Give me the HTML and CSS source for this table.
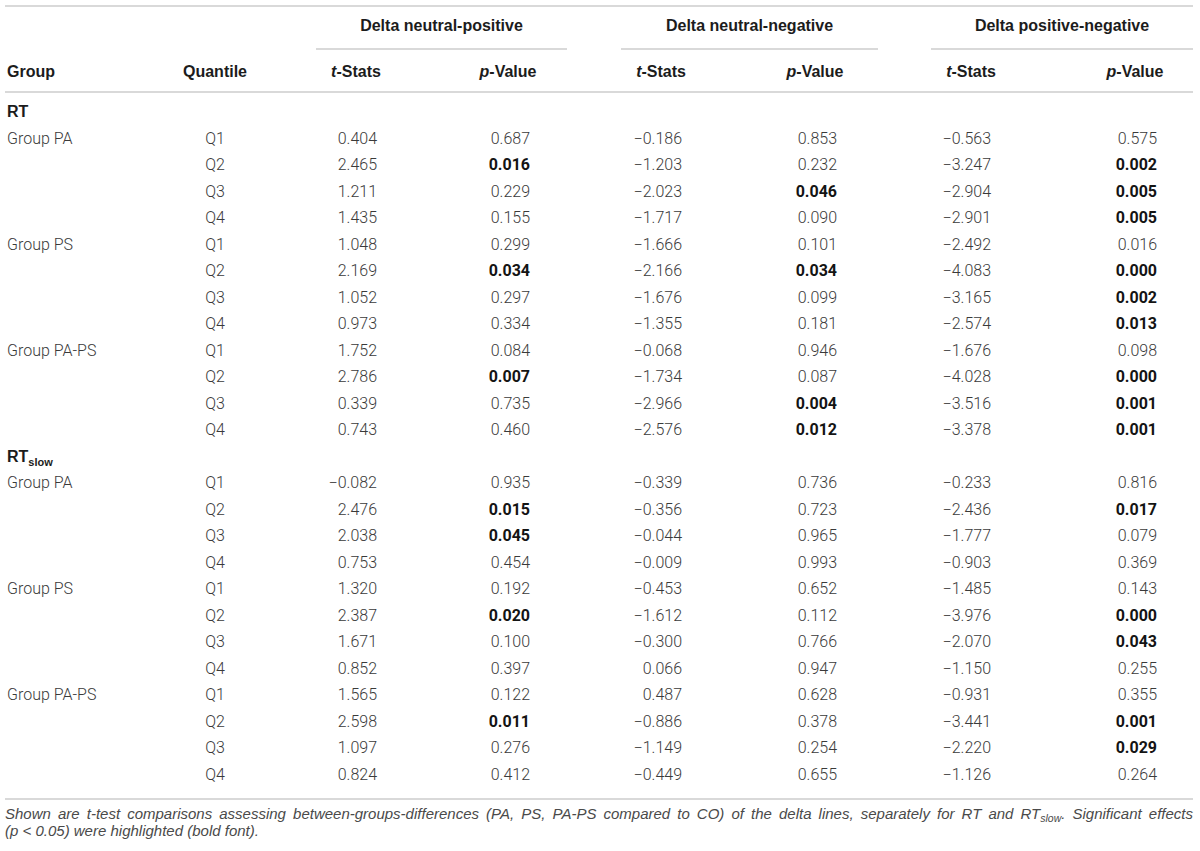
FILE: index.html
```html
<!doctype html>
<html>
  <head>
    <meta charset="UTF-8" />
    <title>Delta lines t-test comparisons</title>
    <link rel="stylesheet" href="styles.css">
  </head>
  <body>
    <table class="results">
      <colgroup>
        <col class="w-group" />
        <col class="w-quant" />
        <col class="w-t1" />
        <col class="w-p1" />
        <col class="w-t2" />
        <col class="w-p2" />
        <col class="w-t3" />
        <col class="w-p3" />
      </colgroup>
      <thead>
        <tr class="head-top">
          <th></th>
          <th></th>
          <th colspan="2"><div class="span-head span-1">Delta neutral-positive</div></th>
          <th colspan="2"><div class="span-head span-2">Delta neutral-negative</div></th>
          <th colspan="2"><div class="span-head span-3">Delta positive-negative</div></th>
        </tr>
        <tr class="head-sub">
          <th class="col-group">Group</th>
          <th>Quantile</th>
          <th><i>t</i>-Stats</th>
          <th><i>p</i>-Value</th>
          <th><i>t</i>-Stats</th>
          <th><i>p</i>-Value</th>
          <th><i>t</i>-Stats</th>
          <th class="last-head"><i>p</i>-Value</th>
        </tr>
      </thead>
      <tbody>
        <tr class="section first"><th colspan="8">RT</th></tr>
        <tr><td>Group PA</td><td>Q1</td><td>0.404</td><td>0.687</td><td>−0.186</td><td>0.853</td><td>−0.563</td><td>0.575</td></tr>
        <tr><td></td><td>Q2</td><td>2.465</td><td><b>0.016</b></td><td>−1.203</td><td>0.232</td><td>−3.247</td><td><b>0.002</b></td></tr>
        <tr><td></td><td>Q3</td><td>1.211</td><td>0.229</td><td>−2.023</td><td><b>0.046</b></td><td>−2.904</td><td><b>0.005</b></td></tr>
        <tr><td></td><td>Q4</td><td>1.435</td><td>0.155</td><td>−1.717</td><td>0.090</td><td>−2.901</td><td><b>0.005</b></td></tr>
        <tr><td>Group PS</td><td>Q1</td><td>1.048</td><td>0.299</td><td>−1.666</td><td>0.101</td><td>−2.492</td><td>0.016</td></tr>
        <tr><td></td><td>Q2</td><td>2.169</td><td><b>0.034</b></td><td>−2.166</td><td><b>0.034</b></td><td>−4.083</td><td><b>0.000</b></td></tr>
        <tr><td></td><td>Q3</td><td>1.052</td><td>0.297</td><td>−1.676</td><td>0.099</td><td>−3.165</td><td><b>0.002</b></td></tr>
        <tr><td></td><td>Q4</td><td>0.973</td><td>0.334</td><td>−1.355</td><td>0.181</td><td>−2.574</td><td><b>0.013</b></td></tr>
        <tr><td>Group PA-PS</td><td>Q1</td><td>1.752</td><td>0.084</td><td>−0.068</td><td>0.946</td><td>−1.676</td><td>0.098</td></tr>
        <tr><td></td><td>Q2</td><td>2.786</td><td><b>0.007</b></td><td>−1.734</td><td>0.087</td><td>−4.028</td><td><b>0.000</b></td></tr>
        <tr><td></td><td>Q3</td><td>0.339</td><td>0.735</td><td>−2.966</td><td><b>0.004</b></td><td>−3.516</td><td><b>0.001</b></td></tr>
        <tr><td></td><td>Q4</td><td>0.743</td><td>0.460</td><td>−2.576</td><td><b>0.012</b></td><td>−3.378</td><td><b>0.001</b></td></tr>
        <tr class="section"><th colspan="8">RT<sub>slow</sub></th></tr>
        <tr><td>Group PA</td><td>Q1</td><td>−0.082</td><td>0.935</td><td>−0.339</td><td>0.736</td><td>−0.233</td><td>0.816</td></tr>
        <tr><td></td><td>Q2</td><td>2.476</td><td><b>0.015</b></td><td>−0.356</td><td>0.723</td><td>−2.436</td><td><b>0.017</b></td></tr>
        <tr><td></td><td>Q3</td><td>2.038</td><td><b>0.045</b></td><td>−0.044</td><td>0.965</td><td>−1.777</td><td>0.079</td></tr>
        <tr><td></td><td>Q4</td><td>0.753</td><td>0.454</td><td>−0.009</td><td>0.993</td><td>−0.903</td><td>0.369</td></tr>
        <tr><td>Group PS</td><td>Q1</td><td>1.320</td><td>0.192</td><td>−0.453</td><td>0.652</td><td>−1.485</td><td>0.143</td></tr>
        <tr><td></td><td>Q2</td><td>2.387</td><td><b>0.020</b></td><td>−1.612</td><td>0.112</td><td>−3.976</td><td><b>0.000</b></td></tr>
        <tr><td></td><td>Q3</td><td>1.671</td><td>0.100</td><td>−0.300</td><td>0.766</td><td>−2.070</td><td><b>0.043</b></td></tr>
        <tr><td></td><td>Q4</td><td>0.852</td><td>0.397</td><td>0.066</td><td>0.947</td><td>−1.150</td><td>0.255</td></tr>
        <tr><td>Group PA-PS</td><td>Q1</td><td>1.565</td><td>0.122</td><td>0.487</td><td>0.628</td><td>−0.931</td><td>0.355</td></tr>
        <tr><td></td><td>Q2</td><td>2.598</td><td><b>0.011</b></td><td>−0.886</td><td>0.378</td><td>−3.441</td><td><b>0.001</b></td></tr>
        <tr><td></td><td>Q3</td><td>1.097</td><td>0.276</td><td>−1.149</td><td>0.254</td><td>−2.220</td><td><b>0.029</b></td></tr>
        <tr class="last"><td></td><td>Q4</td><td>0.824</td><td>0.412</td><td>−0.449</td><td>0.655</td><td>−1.126</td><td>0.264</td></tr>
      </tbody>
    </table>

    <p class="note">
      <span class="note-first">Shown are t-test comparisons assessing between-groups-differences (PA, PS, PA-PS compared to CO) of the delta lines, separately for RT and RT<sub>slow</sub>. Significant effects</span>
      <span class="note-rest">(p &lt; 0.05) were highlighted (bold font).</span>
    </p>
  </body>
</html>
```

FILE: styles.css
```css
:root {
  --rule: #d9d9d9;
  --text: #3a3a3a;
  --strong: #141414;
  --head: #1c1c1c;
}

* {
  margin: 0;
  padding: 0;
  box-sizing: border-box;
}

body {
  font-family: Roboto, 'Liberation Sans', sans-serif;
  font-weight: 300;
  font-size: 16px;
  color: var(--text);
  background: #fff;
}

.results {
  margin: 5px 0 0 5px;
  width: 1188px;
  table-layout: fixed;
  border-collapse: separate;
  border-spacing: 0;
}

.w-group { width: 165px; }
.w-quant { width: 90px; }
.w-t1 { width: 192px; }
.w-p1 { width: 112px; }
.w-t2 { width: 194px; }
.w-p2 { width: 114px; }
.w-t3 { width: 198px; }
.w-p3 { width: 123px; }

/* header */
thead th {
  font-family: 'Liberation Sans', Arial, sans-serif;
  font-weight: 700;
  color: var(--head);
  line-height: 20px;
  text-align: center;
}

.head-top th {
  border-top: 2px solid var(--rule);
  padding: 0;
  vertical-align: bottom;
}

.span-head {
  padding: 9px 0 12px;
  border-bottom: 2px solid var(--rule);
}

.span-1 { margin: 0 -3px 0 56px; }
.span-2 { margin: 0 -6px 0 57px; }
.span-3 { margin: 0 0 0 59px; }

.head-sub th {
  padding: 12px 0 9px;
  border-bottom: 2px solid var(--rule);
}

.head-sub th.col-group {
  text-align: left;
  padding-left: 2px;
}

.head-sub th.last-head {
  padding-left: 7px;
}

/* body */
.section th {
  font-family: 'Liberation Sans', Arial, sans-serif;
  font-weight: 700;
  color: var(--head);
  text-align: left;
  padding-left: 2px;
  line-height: 26.5px;
}

.section.first th {
  padding-top: 6px;
}

.section sub {
  font-size: 11px;
  vertical-align: -4px;
  line-height: 0;
}

td {
  line-height: 26.5px;
  padding: 0;
  white-space: nowrap;
  text-align: right;
}

td b {
  font-weight: 700;
  color: var(--strong);
}

td:nth-child(1) { text-align: left; padding-left: 2px; }
td:nth-child(2) { text-align: center; }
td:nth-child(3) { padding-right: 75px; }
td:nth-child(4) { padding-right: 34px; }
td:nth-child(5) { padding-right: 76px; }
td:nth-child(6) { padding-right: 35px; }
td:nth-child(7) { padding-right: 79px; }
td:nth-child(8) { padding-right: 36px; }

.last td {
  padding-bottom: 10px;
  border-bottom: 2px solid var(--rule);
}

/* footnote */
.note {
  margin: 0 7px 0 5px;
  padding-top: 4.5px;
  font-family: 'Liberation Sans', Arial, sans-serif;
  font-weight: 400;
  font-style: italic;
  font-size: 15px;
  line-height: 17px;
  color: #4a4a4a;
}

.note-first {
  display: block;
  text-align: justify;
  text-align-last: justify;
  white-space: nowrap;
}

.note-rest {
  display: block;
}

.note sub {
  font-size: 10.5px;
  vertical-align: -3px;
  line-height: 0;
}
```
